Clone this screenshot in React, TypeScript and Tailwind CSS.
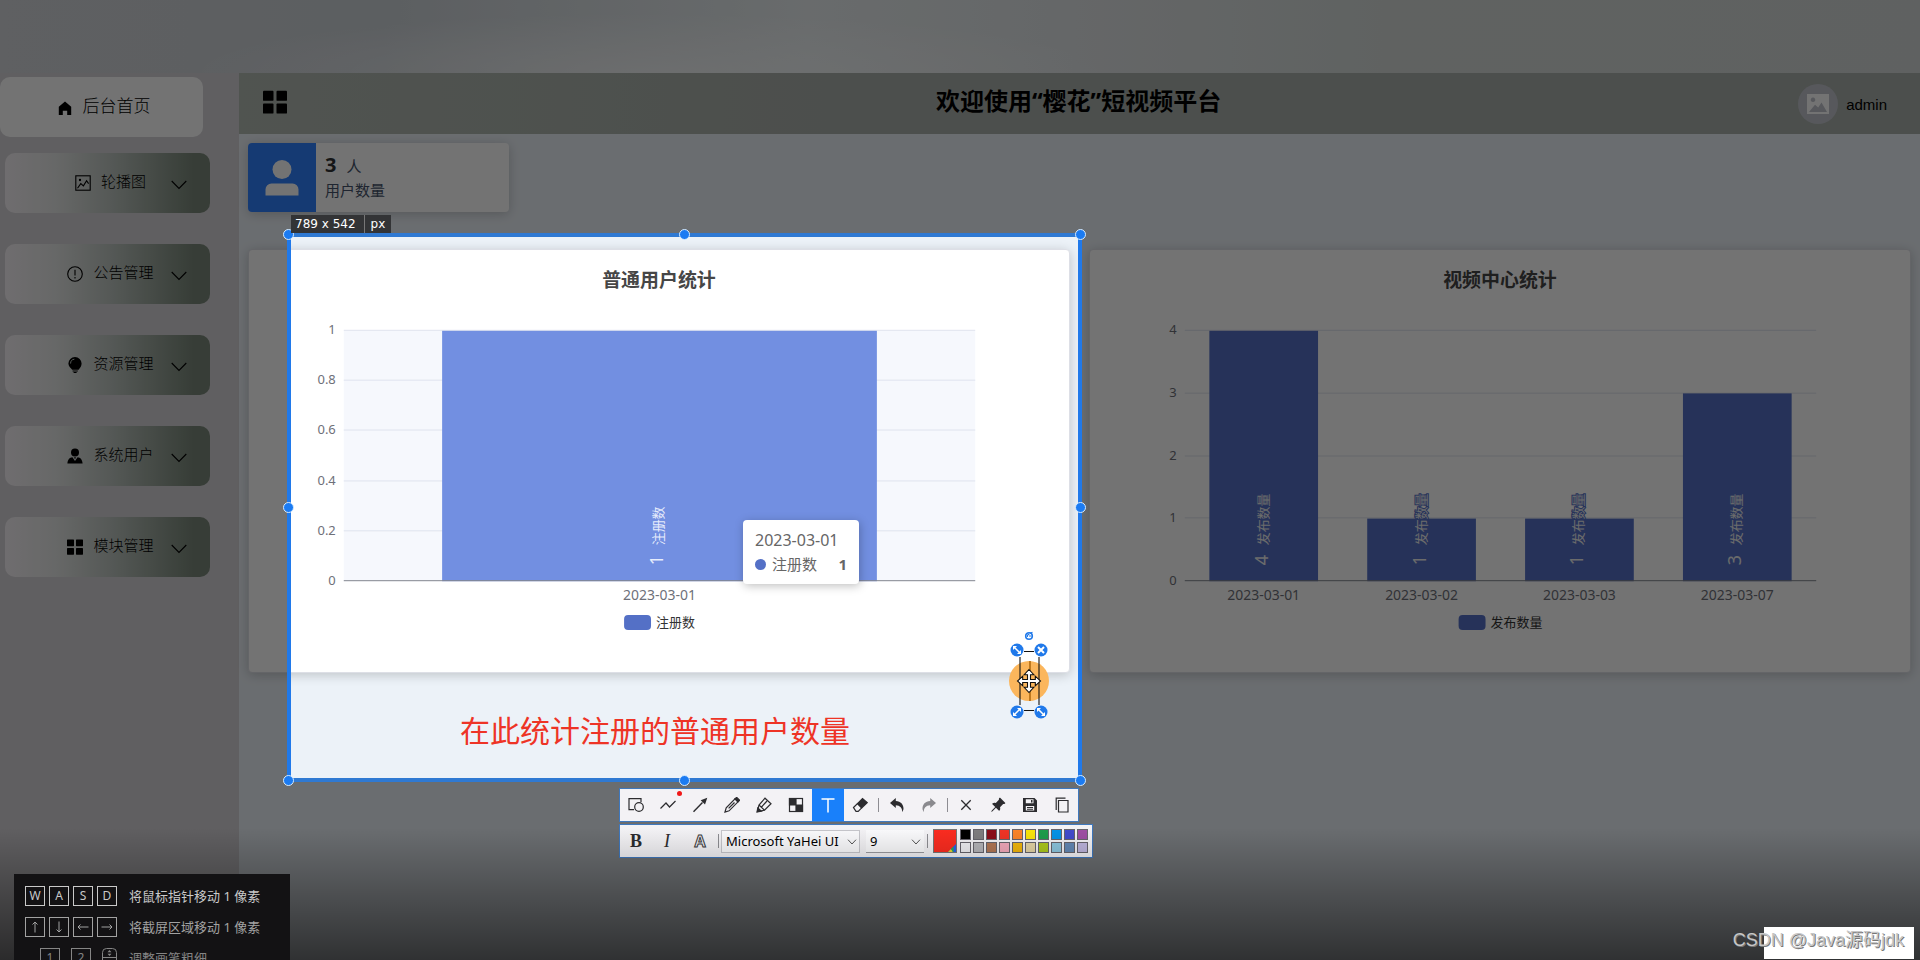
import type { ReactNode } from "react";

/* ---------- sidebar ---------- */

const HomeIcon = () => (
  <svg viewBox="0 0 16 16" className="h-4 w-4 shrink-0" fill="currentColor" aria-hidden="true">
    <path d="M8 1.6 1.8 6.8V15h4v-4.3h4.4V15h4V6.8z" />
  </svg>
);
const PictureIcon = () => (
  <svg viewBox="0 0 16 16" className="h-4 w-4 shrink-0" fill="none" stroke="currentColor" strokeWidth="1.1" aria-hidden="true">
    <rect x="0.8" y="0.8" width="14.4" height="14.4" />
    <circle cx="5" cy="5" r="0.6" />
    <path d="M2.5 13.2 5.8 8.6l2.6 2.2 3.2-5 2 2.8" />
  </svg>
);
const WarningIcon = () => (
  <svg viewBox="0 0 16 16" className="h-4 w-4 shrink-0" fill="none" stroke="currentColor" strokeWidth="1.1" aria-hidden="true">
    <circle cx="8" cy="8" r="7.3" />
    <path d="M8 3.8v5.6M8 11v1.5" />
  </svg>
);
const BulbIcon = () => (
  <svg viewBox="0 0 16 16" className="h-4 w-4 shrink-0" aria-hidden="true">
    <path fill="currentColor" d="M8 0a6.6 6.6 0 0 1 6.6 6.6c0 2.7-1.5 4.3-3 6.2H5.2C3.6 11 1.4 9.3 1.4 6.6A6.6 6.6 0 0 1 8 0zM5.6 13.6h5.2v.9H5.6zM6.6 15h3v1h-3z" />
    <path fill="none" stroke="#bcc4bf" strokeWidth="1" d="M3.6 6.6A4.3 4.3 0 0 1 7.4 2.2" />
  </svg>
);
const AvatarIcon = () => (
  <svg viewBox="0 0 16 16" className="h-4 w-4 shrink-0" fill="currentColor" aria-hidden="true">
    <circle cx="8" cy="4.5" r="4" />
    <path d="M0.4 15.6c.2-4 2.2-6.2 5-6.400L8 13l2.600-3.800c2.800.2 4.800 2.400 5 6.400z" />
    <path d="M7 9.300h2l-1 2z" />
  </svg>
);
const MenuIcon = ({ className = "h-4 w-4 shrink-0" }: { className?: string }) => (
  <svg viewBox="0 0 16 16" className={className} fill="currentColor" aria-hidden="true">
    <rect x="0" y="0.5" width="7" height="6.7" rx="0.6" />
    <rect x="9" y="0.5" width="7" height="6.7" rx="0.6" />
    <rect x="0" y="9" width="7" height="6.7" rx="0.6" />
    <rect x="9" y="9" width="7" height="6.7" rx="0.6" />
  </svg>
);
const ArrowDown = () => (
  <svg viewBox="0 0 16 10" className="mt-1 mr-[23px] h-2.5 w-4 justify-self-end" fill="none" stroke="currentColor" strokeWidth="1.1" aria-hidden="true">
    <path d="M0.700 1 8 8.500 15.300 1" />
  </svg>
);

const menu: { label: string; icon: ReactNode }[] = [
  { label: "轮播图", icon: <PictureIcon /> },
  { label: "公告管理", icon: <WarningIcon /> },
  { label: "资源管理", icon: <BulbIcon /> },
  { label: "系统用户", icon: <AvatarIcon /> },
  { label: "模块管理", icon: <MenuIcon /> },
];

function Sidebar() {
  return (
    <aside className="w-[239px] shrink-0 bg-[#d5d3d7] pt-1 text-black">
      <nav className="flex flex-col items-start">
        <button type="button" className="flex h-[60px] w-[203px] items-center justify-center gap-2.5 rounded-[10px] bg-white pb-0.5 pl-1 text-[17px] font-light">
          <span className="pt-1"><HomeIcon /></span>
          后台首页
        </button>
        <div className="mt-4 ml-[5px] flex flex-col gap-[31px]">
          {menu.map((m) => (
            <button
              key={m.label}
              type="button"
              className="grid h-[60px] w-[205px] grid-cols-[1fr_auto_1fr] items-center rounded-[10px] bg-[linear-gradient(to_right,#f6f2f6_0%,#e4e6e5_25%,#bcc4bf_52%,#7a887a_92%)] pl-1.5 text-[15px] font-light"
            >
              <span />
              <span className="flex items-center gap-2.5 pb-1">
                <span className="pt-1">{m.icon}</span>
                {m.label}
              </span>
              <ArrowDown />
            </button>
          ))}
        </div>
      </nav>
    </aside>
  );
}

/* ---------- header and summary ---------- */

function Header() {
  return (
    <header className="flex h-[61px] items-center justify-between bg-[linear-gradient(to_right,#b2bab2,#a9afaa_35%)] pr-[33px] pl-6 text-black">
      <button type="button" aria-label="折叠菜单" className="pb-1">
        <MenuIcon className="h-6 w-6" />
      </button>
      <h1 className="pb-1.5 pl-[72px] text-2xl font-bold">欢迎使用“樱花”短视频平台</h1>
      <div className="flex items-center gap-2">
        <span className="flex h-10 w-10 items-center justify-center rounded-full bg-[#c0c4cc]">
          <svg viewBox="0 0 22 20" className="h-5 w-[22px]" aria-hidden="true">
            <path fill="#fff" fillRule="evenodd" d="M0 0h22v20H0zM2 18h18l-5.500-9.500-3.300 5-3.200-2.800zM6 3.500a2.300 2.300 0 1 0 .01 0z" />
          </svg>
        </span>
        <span className="pt-1 font-['Liberation_Sans',sans-serif] text-[15px]">admin</span>
      </div>
    </header>
  );
}

function UserCount() {
  return (
    <section className="flex h-[69px] w-[261px] overflow-hidden rounded bg-white shadow-[0_2px_12px_rgba(0,0,0,0.2)]">
      <div className="flex w-[68px] items-center justify-center bg-[#2f80ff]">
        <svg viewBox="0 0 34 36" className="h-9 w-[34px]" fill="#fff" aria-hidden="true">
          <circle cx="17" cy="9.5" r="9.5" />
          <path d="M0.500 35.500v-6a6 6 0 0 1 6-6h21a6 6 0 0 1 6 6v6z" />
        </svg>
      </div>
      <div className="flex flex-col justify-center pl-[9px] text-[15px] leading-6 text-[#46536a]">
        <p>
          <strong className="mr-2.5 text-xl leading-6 text-[#303133]">3</strong>人
        </p>
        <p>用户数量</p>
      </div>
    </section>
  );
}

/* ---------- charts ---------- */

type Bar = { date: string; value: number };

const PLOT = { left: 95, right: 728, top: 81, bottom: 332 };

function BarChart({ title, series, data, ticks, max, active }: {
  title: string;
  series: string;
  data: Bar[];
  ticks: string[];
  max: number;
  active?: boolean;
}) {
  const h = PLOT.bottom - PLOT.top;
  const step = (PLOT.right - PLOT.left) / data.length;
  const bw = step * 0.6885;
  const legendW = 33 + series.length * 13;
  const legendX = 412 - legendW / 2;
  return (
    <section className="min-w-0 flex-1 rounded border border-[#dddfe6] bg-white shadow-[0_2px_12px_rgba(0,0,0,0.2)]">
      <svg viewBox="0 0 822 423" className="block w-full" role="img" aria-label={title}>
        <text x="411" y="37" textAnchor="middle" fontSize="19" fontWeight="700" fill="#464646">{title}</text>
        {active && <rect x={PLOT.left} y={PLOT.top} width={PLOT.right - PLOT.left} height={h} fill="#f6f8fd" />}
        {ticks.map((t, i) => {
          const y = Math.round(PLOT.bottom - (i * h) / (ticks.length - 1)) - 0.5;
          return (
            <g key={t}>
              {i > 0 && <line x1={PLOT.left} x2={PLOT.right} y1={y} y2={y} stroke="#dfe3ee" />}
              <text x="87" y={y + 4} textAnchor="end" fontSize="13" fill="#6e7079">{t}</text>
            </g>
          );
        })}
        {data.map((d, i) => {
          const cx = PLOT.left + step * (i + 0.5);
          const bh = (d.value / max) * h;
          return (
            <g key={d.date}>
              <rect x={cx - bw / 2} y={PLOT.bottom - bh} width={bw} height={bh} fill={active ? "#728fe1" : "#5470c6"} />
              <text x={cx} y="351" textAnchor="middle" fontSize="14" fill="#6e7079">{d.date}</text>
              <g transform={`translate(${cx + 4} 316) rotate(-90)`} fill={active ? "#e6ecfc" : "#eeeeee"} stroke="#5470c6" strokeWidth={active ? 0 : 2} paintOrder="stroke">
                <text x="0" y="0" fontSize="18">{d.value}</text>
                <text x="20" y="0" fontSize="13">{series}</text>
              </g>
            </g>
          );
        })}
        <line x1={PLOT.left} x2={PLOT.right} y1={PLOT.bottom - 0.5} y2={PLOT.bottom - 0.5} stroke="#83868f" />
        <rect x={legendX} y="366" width="27" height="15" rx="4" fill="#5470c6" />
        <text x={legendX + 32} y="378" fontSize="13" fill="#333">{series}</text>
      </svg>
    </section>
  );
}

/* ---------- capture overlay ---------- */

const handles = [
  "-left-2 -top-2",
  "left-1/2 -top-2 -ml-1.5",
  "-right-2 -top-2",
  "-left-2 top-1/2 -mt-1.5",
  "-right-2 top-1/2 -mt-1.5",
  "-left-2 -bottom-2",
  "left-1/2 -bottom-2 -ml-1.5",
  "-right-2 -bottom-2",
];

function Selection() {
  return (
    <div className="absolute top-[233px] left-[287px] h-[549px] w-[795px] border-4 border-[#2079ea] border-t-[#2f79d2] border-b-[#2f79d2] shadow-[0_0_0_2400px_rgba(0,0,0,0.55)]">
      {handles.map((pos) => (
        <span key={pos} className={`absolute h-[11px] w-[11px] rounded-full border border-[#d7ecff] bg-[#1b7bf2] ${pos}`} />
      ))}
      <p className="absolute bottom-[27px] left-[169px] text-[30px] leading-10 whitespace-nowrap text-[#ee3426]">在此统计注册的普通用户数量</p>
    </div>
  );
}

function SizeLabel() {
  return (
    <div className="absolute top-[215px] left-[291px] flex h-[18px] items-center divide-x divide-[#777] bg-[#333436] font-['DejaVu_Sans',sans-serif] text-xs leading-[18px] text-white">
      <span className="pr-2 pl-1">789 x 542</span>
      <span className="px-1.5">px</span>
    </div>
  );
}

function Tooltip() {
  return (
    <div className="absolute top-[520px] left-[743px] w-[116px] rounded bg-white px-3 py-2 text-[15px] leading-6 text-[#666] shadow-[1px_2px_10px_rgba(0,0,0,0.25)]">
      <p className="text-base leading-6">2023-03-01</p>
      <p className="flex items-center">
        <span className="mr-1.5 h-[11px] w-[11px] rounded-full bg-[#5470c6]" />
        注册数
        <strong className="ml-auto">1</strong>
      </p>
    </div>
  );
}

function TextHandle() {
  return (
    <svg viewBox="0 0 50 92" className="absolute top-[630px] left-[1004px] h-[92px] w-[50px]" aria-hidden="true">
      <circle cx="25" cy="51" r="20" fill="#fbb65c" />
      <path d="M16 27v48M35 27v48M20 21.500h10M20 80.500h10" stroke="#111" strokeWidth="1.1" />
      <path d="M26 31v40" stroke="#b06a10" strokeWidth="1.6" />
      <path d="M25 39.500l4.800 5.200h-3.300v4.800h4.800v-3.300L36.500 51l-5.200 4.800v-3.300h-4.800v4.800h3.300L25 62.500l-4.800-5.200h3.300v-4.800h-4.800v3.300L13.500 51l5.200-4.800v3.300h4.800v-4.800h-3.300z" fill="#fff" stroke="#111" strokeWidth="1.1" />
      <circle cx="25" cy="6" r="3.3" fill="#fff" stroke="#2079ea" strokeWidth="1.6" />
      <path d="M25 6h2.500M23.500 7a2 2 0 0 1 2-2.800M28.500 2.200l-2.500 1" stroke="#2079ea" strokeWidth="1.2" fill="none" />
      <g fill="#2079ea">
        <circle cx="13" cy="20" r="6.5" />
        <circle cx="37" cy="20" r="6.5" />
        <circle cx="13" cy="82" r="6.5" />
        <circle cx="37" cy="82" r="6.5" />
      </g>
      <path d="M34 17l6 6M40 17l-6 6" stroke="#fff" strokeWidth="2" />
      <path d="M10.500 17.500l5 5M34.500 79.500l5 5M10.500 84.500l5-5" stroke="#fff" strokeWidth="1.5" />
      <path d="M9 16h4l-4 4zM17 24h-4l4-4zM33 78h4l-4 4zM41 86h-4l4-4zM9 86h4l-4-4zM17 78h-4l4 4z" fill="#fff" />
    </svg>
  );
}

const Ico = ({ children }: { children: ReactNode }) => (
  <svg viewBox="0 0 16 16" className="h-4 w-4" fill="none" stroke="currentColor" strokeWidth="1.2" aria-hidden="true">
    {children}
  </svg>
);

const Divider = () => <span className="mx-0.5 h-3.5 w-px bg-[#8d8d92]" />;

type Tool = { label: string; icon: ReactNode; tone?: string; dot?: boolean };

const drawTools: Tool[] = [
  { label: "形状", icon: <Ico><path d="M13 5V1.700H1v11h5" /><circle cx="11" cy="10" r="4.3" /></Ico> },
  { label: "折线", icon: <Ico><path d="M0.500 11.500 6 6l3.500 4 6-6" strokeWidth="1.2" /></Ico>, dot: true },
  { label: "箭头", icon: <Ico><path d="M1.500 14.800 10.500 5.500" strokeWidth="1.4" /><path d="M15.300 0.800 13 7.600 8.700 3.300z" fill="currentColor" stroke="none" /></Ico> },
  { label: "铅笔", icon: <Ico><path d="M1 15l1.200-4.200L11 1.800l3 3-8.900 9z" /><path d="M4.600 11.400 10.500 5.500" /><path d="M11 1.800 12.700.4l2.900 2.900L14 4.800z" fill="currentColor" /></Ico> },
  { label: "记号笔", icon: <Ico><path d="M1.500 14.500 3 8l6-6.800 6 5.600-6.500 6.400z" /><path d="M3 8l5.500 5.200M5.500 10 11 4" /><path d="M1 15l.8-4 3.500 3.200z" fill="currentColor" /></Ico> },
  { label: "马赛克", icon: <Ico><rect x="1.5" y="1.5" width="13" height="13" /><path d="M1.500 1.500H8V8H1.500zM8 8h6.500v6.500H8z" fill="currentColor" /></Ico> },
  { label: "文字", icon: <Ico><path d="M1.500 2h13M8 2v13.500" strokeWidth="1.5" /></Ico>, tone: "bg-[#1980fa] text-white" },
  { label: "橡皮", icon: <Ico><path d="M1.500 10.500 5.500 6.600l4.200 4.200-3.500 3.500H4z" /><path d="M5.500 6.600 10.500 1.500l4.700 4.200-5.500 5.100z" fill="currentColor" /></Ico> },
];
const historyTools: Tool[] = [
  { label: "撤销", icon: <Ico><path d="M1 6 6.800 1v3c5 .3 7.700 3.500 7.700 7.500 0 1.300-.6 2.500-1.500 3.500.6-4-2-6.500-6.200-6.700V11z" fill="currentColor" stroke="none" /></Ico> },
  { label: "重做", icon: <Ico><path d="M15 6 9.200 1v3c-5 .3-7.700 3.500-7.700 7.500 0 1.300.6 2.500 1.500 3.500-.6-4 2-6.500 6.200-6.700V11z" fill="currentColor" stroke="none" /></Ico>, tone: "text-[#8a8a8e]" },
];
const endTools: Tool[] = [
  { label: "关闭", icon: <Ico><path d="M3.300 3.300l9.400 9.400M12.700 3.300l-9.400 9.400" strokeWidth="1.3" /></Ico> },
  { label: "贴图", icon: <Ico><path stroke="none" fill="currentColor" d="M9.828.722a.5.5 0 0 1 .354.146l4.950 4.950a.5.5 0 0 1 0 .707c-.48.48-1.072.588-1.503.588-.177 0-.335-.018-.46-.039l-3.134 3.134a6 6 0 0 1 .16 1.013c.046.702-.032 1.687-.72 2.375a.5.5 0 0 1-.707 0l-2.829-2.828-3.182 3.182c-.195.195-1.219.902-1.414.707s.512-1.220.707-1.414l3.182-3.182-2.828-2.829a.5.5 0 0 1 0-.707c.688-.688 1.673-.767 2.375-.72a6 6 0 0 1 1.013.16l3.134-3.133a3 3 0 0 1-.04-.461c0-.43.108-1.022.589-1.503a.5.5 0 0 1 .353-.146" /></Ico> },
  { label: "保存", icon: <Ico><path fillRule="evenodd" stroke="none" fill="currentColor" d="M1 1h11.500L15 3.500V15H1zM3.800 2.300v4h7.700v-4zM3.800 9v4.600h8.400V9zM9 3h1.500v2.500H9zM5 10h6v.9H5zM5 11.800h6v.9H5z" /></Ico> },
  { label: "复制", icon: <Ico><path d="M4.500 3.500h9.500v11.500H4.500z" /><path d="M2.200 13V1.200h9.300" /></Ico> },
];

const Tools = ({ items }: { items: Tool[] }) => (
  <>
    {items.map((t) => (
      <button key={t.label} type="button" aria-label={t.label} className={`relative flex h-8 w-8 items-center justify-center ${t.tone ?? "text-[#2c2c2f]"}`}>
        {t.icon}
        {t.dot && <span className="absolute top-0.5 right-0.5 h-[5px] w-[5px] rounded-full bg-[#f01818]" />}
      </button>
    ))}
  </>
);

const swatches = [
  "bg-[#000000]", "bg-[#7f7d7f]", "bg-[#8b0e1a]", "bg-[#f03426]", "bg-[#fb8429]", "bg-[#f8e50a]", "bg-[#1c9c4c]", "bg-[#0693e6]", "bg-[#414bcb]", "bg-[#9e4ea4]",
  "bg-[#eeeef2]", "bg-[#b4b4b8]", "bg-[#b07654]", "bg-[#f2a9bb]", "bg-[#f2b60c]", "bg-[#e3d3a4]", "bg-[#abc81c]", "bg-[#8bc5de]", "bg-[#6488b4]", "bg-[#bcb4dc]",
];

function Chevron({ className }: { className: string }) {
  return (
    <svg viewBox="0 0 10 6" className={`pointer-events-none absolute top-[9px] h-1.5 w-2.5 ${className}`} fill="none" stroke="#555" aria-hidden="true">
      <path d="M1 0.700 5 5 9 0.700" />
    </svg>
  );
}

function Toolbars() {
  return (
    <div className="absolute top-[788px] left-[619px] flex flex-col items-start gap-0.5">
      <div className="flex items-center border border-[#3f78bd] bg-[#f3f2f5]">
        <Tools items={drawTools} />
        <Divider />
        <Tools items={historyTools} />
        <Divider />
        <Tools items={endTools} />
      </div>
      <div className="flex h-[34px] items-center border border-[#3f78bd] bg-[#f3f2f5] pr-1 text-[#2c2c2f]">
        <button type="button" aria-label="粗体" className="h-8 w-8 font-['Liberation_Serif',serif] text-lg leading-8 font-bold">B</button>
        <button type="button" aria-label="斜体" className="h-8 w-8 pr-0.5 font-['Liberation_Serif',serif] text-lg leading-8 italic">I</button>
        <button type="button" aria-label="描边" className="h-8 w-8 text-base leading-8 font-bold text-[#f3f2f5] [-webkit-text-stroke:1px_#3a3a3d]">A</button>
        <Divider />
        <label className="relative block">
          <select aria-label="字体" defaultValue="Microsoft YaHei UI" className="block h-[23px] w-[139px] appearance-none border border-[#c6c6cb] bg-[#fafafc] pl-1 font-['Noto_Sans',sans-serif] text-[13px] leading-5 text-black">
            <option>Microsoft YaHei UI</option>
          </select>
          <Chevron className="right-[3px]" />
        </label>
        <label className="relative mr-px ml-1.5 block">
          <select aria-label="字号" defaultValue="9" className="block h-[23px] w-[58px] appearance-none border-b border-[#9a9a9f] bg-[#fafafc] pl-1 font-['Noto_Sans',sans-serif] text-[13px] leading-5 text-black">
            <option>9</option>
          </select>
          <Chevron className="right-[3px]" />
        </label>
        <Divider />
        <button type="button" aria-label="当前颜色" className="ml-[3px] h-6 w-6 border border-[#777] bg-[#fb2c20]">
          <svg viewBox="0 0 22 22" className="block h-full w-full" aria-hidden="true">
            <path d="M22 14v8h-8z" fill="#2b5fe8" />
            <path d="M14 22l3-3 2 3z" fill="#f1d22a" />
            <path d="M17 19l2.500-2.500V22H19z" fill="#24b04c" />
          </svg>
        </button>
        <div className="ml-[3px] grid grid-cols-10 gap-0.5">
          {swatches.map((c) => (
            <button key={c} type="button" aria-label="颜色" className={`h-[11px] w-[11px] border border-[#66646c] ${c}`} />
          ))}
        </div>
      </div>
    </div>
  );
}

const Key = ({ children }: { children: ReactNode }) => (
  <kbd className="flex h-5 w-5 items-center justify-center border border-current font-['Noto_Sans','DejaVu_Sans',sans-serif] text-xs leading-none">{children}</kbd>
);

const KeyArrow = ({ d }: { d: string }) => (
  <svg viewBox="0 0 12 12" className="h-3 w-3" fill="none" stroke="currentColor" aria-hidden="true">
    <path d={d} />
  </svg>
);

function Shortcuts() {
  return (
    <div className="absolute bottom-0 left-[14px] flex h-[86px] w-[276px] flex-col gap-[11px] overflow-hidden bg-[#131214] pt-3 pl-[11px] text-[13px] leading-5 whitespace-nowrap">
      <div className="flex gap-3 text-[#c9c9c9]">
        <span className="flex w-[92px] gap-1"><Key>W</Key><Key>A</Key><Key>S</Key><Key>D</Key></span>
        将鼠标指针移动 1 像素
      </div>
      <div className="flex gap-3 text-[#a2a2a2]">
        <span className="flex w-[92px] gap-1">
          <Key><KeyArrow d="M6 11.500V1M3.500 3.500 6 1l2.500 2.500" /></Key>
          <Key><KeyArrow d="M6 .5V11M3.500 8.500 6 11l2.500-2.500" /></Key>
          <Key><KeyArrow d="M11.500 6H1M3.500 3.500 1 6l2.500 2.500" /></Key>
          <Key><KeyArrow d="M.5 6H11M8.500 3.500 11 6 8.500 8.500" /></Key>
        </span>
        将截屏区域移动 1 像素
      </div>
      <div className="flex gap-3 text-[#858585]">
        <span className="flex w-[92px] justify-end gap-[11px]">
          <Key>1</Key>
          <Key>2</Key>
          <svg viewBox="0 0 15 20" className="h-5 w-[15px]" fill="none" stroke="currentColor" aria-hidden="true">
            <rect x="0.5" y="0.5" width="14" height="19" rx="4" />
            <path d="M0.500 9.500h14" />
            <path d="M7.500 2 5.500 4.200h4zM7.500 8 5.500 5.800h4z" fill="currentColor" stroke="none" />
          </svg>
        </span>
        调整画笔粗细
      </div>
    </div>
  );
}

/* ---------- page ---------- */

export default function App() {
  return (
    <div className="relative flex min-h-screen flex-col overflow-hidden bg-[#ecf2f8] font-['Noto_Sans','Noto_Sans_CJK_SC',sans-serif]">
      <div className="h-[73px] shrink-0 bg-[radial-gradient(ellipse_460px_60px_at_34%_100%,rgba(255,255,255,0.55),transparent),linear-gradient(to_right,#d2d4d9,#ccd2d7_20%,#e8eef0_42%,#e0e4e6_56%,#d4dad8_72%,#d3d8d8)]" />
      <div className="flex flex-1">
        <Sidebar />
        <div className="min-w-0 flex-1">
          <Header />
          <main className="px-[9px] pt-[9px]">
            <UserCount />
            <div className="mt-[37px] flex gap-[19px]">
              <BarChart title="普通用户统计" series="注册数" data={[{ date: "2023-03-01", value: 1 }]} ticks={["0", "0.2", "0.4", "0.6", "0.8", "1"]} max={1} active />
              <BarChart
                title="视频中心统计"
                series="发布数量"
                data={[
                  { date: "2023-03-01", value: 4 },
                  { date: "2023-03-02", value: 1 },
                  { date: "2023-03-03", value: 1 },
                  { date: "2023-03-07", value: 3 },
                ]}
                ticks={["0", "1", "2", "3", "4"]}
                max={4}
              />
            </div>
          </main>
        </div>
      </div>

      <Tooltip />
      <Selection />
      <TextHandle />
      <SizeLabel />
      <Toolbars />
      <div className="pointer-events-none absolute inset-x-0 bottom-0 h-[132px] bg-linear-to-b from-transparent to-black/55" />
      <Shortcuts />
      <div className="absolute right-1.5 bottom-px h-8 w-[150px] bg-white" />
      <p className="absolute right-4 bottom-1.5 font-['Liberation_Sans','Noto_Sans_CJK_SC',sans-serif] text-lg leading-7 whitespace-nowrap text-[#c6c6c6] [text-shadow:1px_1px_0_#777]">CSDN @Java源码jdk</p>
    </div>
  );
}
